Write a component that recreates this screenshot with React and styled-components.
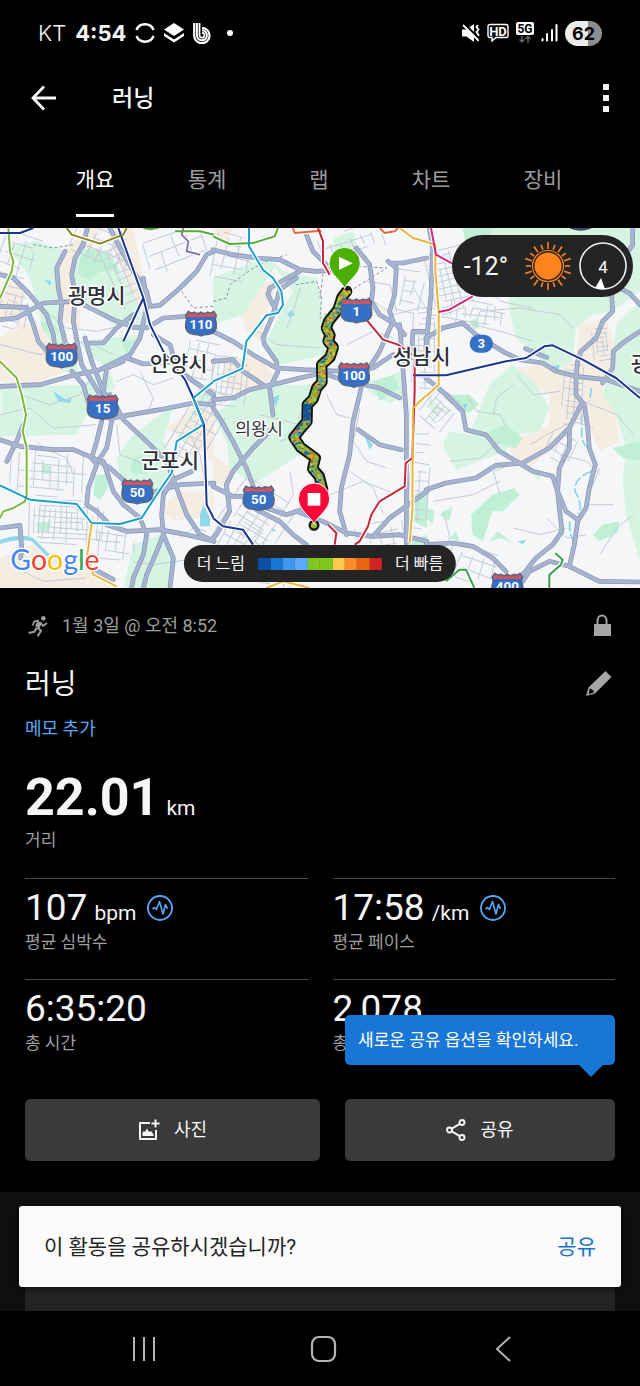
import React from "react"
import styled, { createGlobalStyle } from "styled-components"

const GlobalStyle = createGlobalStyle`
  * {
    box-sizing: border-box;
  }
  body {
    margin: 0;
    background: #000;
    color: #f5f5f5;
    font-family: Roboto, "Noto Sans CJK KR", sans-serif;
  }
  button {
    border: 0;
    padding: 0;
    background: none;
    color: inherit;
    font: inherit;
    cursor: pointer;
  }
  svg {
    display: block;
    flex: none;
  }
`
const StatusBar = styled.header`
  display: flex;
  align-items: center;
  justify-content: space-between;
  height: 66px;
  padding: 0 38px;
  font-family: Inter, sans-serif;
  font-size: 22px;
  line-height: 28px;
`
const StatusGroup = styled.div`
  display: flex;
  align-items: center;
  gap: ${props => props.$gap}px;
`
const Carrier = styled.span`
  font-weight: 300;
`
const Clock = styled.time`
  font-weight: 700;
`
const More = styled.span`
  width: 6px;
  height: 6px;
  margin-left: 7px;
  border-radius: 50%;
  background: #fff;
`
const Battery = styled.span`
  width: 37px;
  border-radius: 13px;
  background: linear-gradient(90deg, #ececec 62%, #8d8d8d 62%);
  color: #000;
  font-size: 18px;
  font-weight: 700;
  line-height: 25px;
  text-align: center;
`
const AppBar = styled.div`
  display: flex;
  align-items: center;
  height: 64px;
  padding: 0 30px;
`
const AppTitle = styled.h1`
  flex: 1;
  margin: 0 0 0 56px;
  padding-top: 2px;
  font-size: 23px;
  font-weight: 500;
  line-height: 32px;
`
const Tabs = styled.nav`
  display: flex;
  height: 98px;
  padding: 0 41px 0 39px;
`
const Tab = styled.button`
  flex: 1;
  display: flex;
  justify-content: center;
  color: ${props => (props.$active ? "#fff" : "#9c9c9c")};
  font-size: 21px;
  line-height: 100px;

  span {
    height: 87px;
    border-bottom: 3px solid ${props => (props.$active ? "#fff" : "transparent")};
  }
`
const MapArea = styled.section`
  position: relative;
  height: 360px;
  overflow: hidden;
  background: #f5f6f8;

  > svg {
    width: 100%;
    height: 100%;
  }
`
const Weather = styled.div`
  position: absolute;
  top: 7px;
  right: 7px;
  display: flex;
  align-items: center;
  height: 62px;
  padding: 0 6px 0 12px;
  border-radius: 31px;
  background: #242424;
  font-size: 25px;
  gap: 16px;
`
const WeatherIcons = styled.div`
  display: flex;
  align-items: center;
  gap: 7px;
`
const Legend = styled.div`
  position: absolute;
  bottom: 6px;
  left: 50%;
  transform: translateX(-50%);
  display: flex;
  align-items: center;
  gap: 13px;
  height: 37px;
  padding: 0 13px;
  border-radius: 19px;
  background: #242424;
  font-size: 16px;
  line-height: 20px;
  white-space: nowrap;
`
const Scale = styled.div`
  display: flex;
  width: 124px;
  height: 12px;
`
const Swatch = styled.span`
  flex: 1;
  background: ${props => props.$color};
`
const Details = styled.main`
  padding: 25px 25px 31px;
`
const Row = styled.div`
  display: flex;
  align-items: center;
  gap: 13px;
`
const TitleRow = styled.div`
  display: flex;
  align-items: center;
  margin-top: 24px;
  padding-right: 2px;
`
const When = styled.span`
  flex: 1;
  color: #9e9e9e;
  font-size: 18px;
  line-height: 26px;
`
const ActivityName = styled.h2`
  flex: 1;
  margin: 0;
  padding-top: 2px;
  font-size: 28px;
  font-weight: 400;
  line-height: 40px;
`
const NoteLink = styled.a`
  display: block;
  margin-top: 12px;
  color: #5aa7f5;
  font-size: 18px;
  line-height: 24px;
  text-decoration: none;
`
const Value = styled.div`
  display: flex;
  align-items: baseline;
  gap: 7px;
  font-size: ${props => (props.$big ? 52 : 37)}px;
  font-weight: ${props => (props.$big ? 700 : 400)};
  line-height: ${props => (props.$big ? 60 : 44)}px;

  svg {
    align-self: center;
    margin-left: 4px;
  }
`
const Unit = styled.span`
  font-size: 21px;
  font-weight: 400;
  line-height: 24px;
`
const Label = styled.div`
  color: #9e9e9e;
  font-size: 17px;
  line-height: 24px;
`
const Distance = styled.div`
  margin: 27px 0 26px;
`
const Stats = styled.div`
  display: grid;
  grid-template-columns: 1fr 1fr;
  column-gap: 25px;
`
const Stat = styled.div`
  padding: 7px 0 25px;
  border-top: 1px solid #484848;
`
const Actions = styled.div`
  display: grid;
  grid-template-columns: 295fr 270fr;
  gap: 25px;
  margin-top: 19px;
`
const ActionCell = styled.div`
  position: relative;
`
const ActionButton = styled.button`
  display: flex;
  align-items: center;
  justify-content: center;
  gap: 14px;
  width: 100%;
  height: 62px;
  border-radius: 5px;
  background: #3a3a3a;
  font-size: 18px;
  line-height: 24px;
`
const Tooltip = styled.div`
  position: absolute;
  right: 0;
  bottom: 96px;
  left: 0;
  padding: 0 13px;
  border-radius: 5px;
  background: #1976d5;
  color: #fff;
  font-size: 17px;
  line-height: 50px;
  white-space: nowrap;

  &::after {
    content: "";
    position: absolute;
    top: 100%;
    right: 12px;
    border: 12px solid transparent;
    border-top-color: #1976d5;
    border-bottom: 0;
  }
`
const Feed = styled.section`
  padding: 14px 19px 0;
  background: #0f0f0f;
`
const Snackbar = styled.div`
  position: relative;
  display: flex;
  align-items: center;
  justify-content: space-between;
  height: 81px;
  padding: 0 25px;
  border-radius: 3px;
  background: #fbfbfb;
  box-shadow: 0 3px 6px rgba(0, 0, 0, 0.5);
  color: #242424;
  font-size: 21px;
  line-height: 28px;
`
const SnackbarAction = styled.button`
  color: #1a73c8;
`
const FeedCard = styled.div`
  height: 24px;
  margin: 0 6px;
  background: #242424;
`
const SystemNav = styled.footer`
  display: flex;
  height: 75px;
  padding: 0 47px 0 54px;
`
const NavKey = styled.button`
  flex: 1;
  display: flex;
  align-items: center;
  justify-content: center;
`

/* ---- map ---- */

// The map is drawn on a 1920 x 1080 sheet, split into three columns
const COLUMN_X = [0, 639, 1278]

const BEIGE = [
  [
    "M0 330L60 280L130 300L160 380L200 430L90 470L0 460Z",
    "M160 100L200 60L270 0H310L250 90L240 300L190 280Z",
    "M320 0H400L430 150L420 260L360 110Z",
    "M0 990L100 950L200 1000L330 1050L340 1080H0Z",
    "M480 840L540 790L642 790V860L520 880Z",
    "M20 150L70 190L60 260L0 280V180Z",
    "M500 600L600 520L642 560V700L560 640Z",
  ],
  [
    "M60 200L200 150L160 260L140 340L100 310Z",
    "M30 400L130 380L200 460L100 520L40 470Z",
    "M0 680L60 720L40 780L0 760Z",
    "M0 0H60L40 40L0 30Z",
  ],
  ["M260 420L450 400L460 290L540 270L575 370L530 480L570 560L580 640L520 670L490 600L450 560L400 640L300 730L240 650L370 590L370 500Z"],
]

const PARK = [
  [
    "M20 50L110 40L200 70L180 110L190 300L240 440L190 430L130 300L90 150Z",
    "M230 60L330 70L420 240L440 300L340 290L260 230L215 230Z",
    "M0 480L240 470L330 430L345 480L260 560L230 620L0 625Z",
    "M520 530L490 640L520 700L510 790L430 800L360 740L350 690L400 620Z",
    "M400 950L480 920L530 1000L510 1080H370Z",
    "M560 580L600 560L642 520V480L600 500Z",
    "M240 340L420 320L370 390L320 420L260 380Z",
  ],
  [
    "M165 90L210 130L310 150L325 230L340 380L200 410L160 340L200 260L240 190Z",
    "M0 150L150 90L190 110L90 260L0 290Z",
    "M0 560L60 520L170 470L300 470L290 560L240 620L260 680L120 770L50 720L40 640Z",
    "M430 450L500 460L560 430L570 510L530 525L480 500Z",
    "M360 30L420 10L430 50L370 80Z",
  ],
  [
    "M160 0H642V190L560 250L500 260L450 300L440 400L380 430L270 330L250 250L250 180Z",
    "M570 290L642 220V1000L600 860L590 760L600 660L570 560L530 500L560 400Z",
    "M190 470L260 410L330 470L370 540L340 610L260 620L240 670L90 725L50 650L70 610L130 620Z",
    "M0 500L60 550L20 560Z",
    "M320 740L350 730L340 760Z",
  ],
]

const FOREST = [
  [
    "M240 90L265 60L320 75L360 130L300 130L270 155L235 140Z",
    "M285 740H320L325 780L300 815L280 800Z",
    "M110 885L155 880L145 910H115Z",
    "M125 710L155 715L150 740L125 735Z",
    "M360 330L400 340L380 380Z",
    "M120 280L160 290L180 310L130 310Z",
    "M400 690L430 680L440 740L390 735Z",
  ],
  ["M480 460L540 440L560 480L500 520Z", "M590 800L642 790V900L600 880Z", "M590 940L642 920V1000L600 1010Z"],
  [
    "M135 860L200 800L265 780L280 800L230 850L200 850L170 940L140 920Z",
    "M500 920L530 890L580 880L575 915L520 940Z",
    "M190 610L240 590L290 630L270 660L200 640Z",
    "M70 500L130 500L160 530L130 555L90 545Z",
    "M130 280L155 270L160 295L145 305Z",
    "M560 660L642 640V700L590 690Z",
    "M215 910L260 945L225 930L190 940Z",
    "M40 860L80 835L70 880Z",
    "M0 840L25 850L20 890L0 870Z",
    "M70 930L90 910L100 940Z",
    "M110 0H200L180 40L120 50Z",
  ],
]

const WATER = [
  [
    "M160 490L200 515L215 510L210 525L175 520Z",
    "M610 830L630 870V895H600V860Z",
    "M135 155L155 160L150 175Z",
    "M0 935Q60 915 100 930L150 980L140 985L95 940Q50 930 0 948Z",
  ],
  ["M222 260L235 245L245 260L230 268Z", "M175 510L200 500L190 535Z", "M455 625L480 650L470 665Z", "M175 900L190 905L180 912Z"],
  ["M378 415L400 410L398 425L382 428Z", "M275 940L300 935L290 950Z", "M110 530L125 525L118 545Z"],
]

const ROADS = [
  [
    "M0 140L40 150L90 200L140 260L160 320L165 360",
    "M0 275L50 270L130 225L230 220L270 240L340 275L400 298L440 300L490 270L560 265",
    "M0 235L80 238L100 290L115 340L150 380",
    "M0 475L120 470L210 445L300 425L350 400L390 380L420 330L442 230L430 150",
    "M195 70L170 120L175 180L185 230L180 280L195 340",
    "M262 0L250 50L225 90L215 140L225 200L220 280L235 360L245 410L300 500",
    "M330 0L360 60L400 130L440 190L450 235L480 232L540 180L590 130L620 80L642 70",
    "M255 330L275 400L310 490L330 520",
    "M270 345H310L350 300L400 260",
    "M215 430L250 470L270 540L330 572L380 562L480 545L580 525L642 530",
    "M330 500L370 575L450 650L500 700L530 780L560 860L600 920L642 940",
    "M310 490L320 420L370 400",
    "M305 580L290 640L275 690L290 710L265 780L260 830L290 850L320 880",
    "M335 580L320 660L300 690",
    "M0 635L60 655L160 665L220 665L290 695L330 720L380 765",
    "M310 700L340 790L370 830L420 870L440 920L430 980L400 1050L395 1080",
    "M450 795L540 770L642 765",
    "M575 730L520 755L490 800L485 860L490 920L470 970L440 1040L430 1080",
    "M0 900L60 892L65 960L62 990",
    "M490 920L520 990L510 1080",
    "M320 890L380 910L480 905L560 920L642 940",
    "M70 590L50 640L20 700",
    "M460 320L510 350L530 420L580 460L642 500",
    "M380 390L430 408L540 400",
    "M285 1025L340 1055",
  ],
  [
    "M0 65L60 80L130 90L200 95L260 125L310 130L390 125",
    "M280 20L300 70L340 110",
    "M430 60L470 110L480 180L475 220L500 260L550 290L575 320",
    "M525 100L550 120L545 200L530 250L540 280L500 370L450 450L440 500L420 580L410 680L385 780L380 850L400 920",
    "M530 105L570 105L642 90",
    "M0 310L60 340L120 380L190 420L270 425L400 430L480 420L540 380",
    "M0 515L60 510L110 485L200 465L260 450L330 435L400 460L500 480L560 510",
    "M190 250L165 200L170 180L260 130",
    "M250 150L200 185L180 260L150 330L155 350L190 400L195 430L170 480L180 560",
    "M0 400L60 395L90 430L150 470",
    "M0 540L20 570L60 640L100 720L130 800L160 840L220 860L280 840",
    "M180 600L120 660L60 730L40 770L50 850L10 920L0 930",
    "M0 775L60 805H120",
    "M130 845L200 880L240 920L280 950",
    "M250 850L330 880L400 915L480 925L530 870L642 790",
    "M435 605L500 650L565 665",
    "M595 390L600 310H642",
    "M560 290L580 560V950",
    "M480 925L560 920L642 940",
  ],
  [
    "M10 0L20 60L15 200L0 360",
    "M0 330L50 300L110 285L150 320L230 370L280 395L350 405L390 430L450 445L540 455L642 490",
    "M557 200L560 250L530 280L510 330L465 370L455 400L450 450V500L475 530L485 600L490 660L508 710L490 780L480 840L455 880L445 950L430 1015",
    "M530 465L560 420L562 370L590 345L642 310",
    "M0 450L60 500L110 550L120 605L180 620L220 670L280 705",
    "M465 530L430 600L370 660L290 705L210 712L150 750L60 765L0 785",
    "M280 705L320 730L380 745L395 790L400 840L408 910L380 950L330 990L290 1040",
    "M430 600V660L400 720L395 790L420 850L455 875",
    "M290 1060L310 1030L370 1000L430 1015L520 1060L642 1062",
    "M0 950L80 945L140 955L200 990L240 1030",
    "M570 175L610 195L642 230",
    "M620 0V50L600 80",
    "M298 362L362 388",
  ],
]

const RAILS = [
  [
    ["#7cb83c", "M25 0L30 70L40 100L35 130L0 210M0 400L50 450L65 500L78 560L68 610L80 660V800L75 820L40 840L10 850L0 870"],
    ["#18378c", "M0 15H60L100 0M355 0L430 210L370 340M430 210L450 290L490 370L555 455L580 510L612 590L620 830L642 872"],
    ["#1d9fcb", "M0 772L90 815L230 828L275 885L360 888L425 870L470 800L515 735L530 640L610 590L580 510L642 460"],
    ["#ecb53c", "M275 885L262 980L280 1040L350 1075"],
    ["#878620", "M200 0L215 20L300 47L370 20L380 0"],
    ["#8c74b9", "M550 0L545 20L565 40L560 70L600 80"],
    ["#55ad31", "M430 0L450 4L475 0M525 10H600L642 20"],
  ],
  [
    ["#55ad31", "M0 25L50 48L120 45L185 25L195 0"],
    ["#1d9fcb", "M0 460L88 422L100 340L160 262L195 255L210 230L205 190L180 150L150 125L108 55V0"],
    ["#18378c", "M0 870L30 895L90 905L120 950M600 442H642"],
    ["#e8673a", "M240 0L245 15L325 8M500 0L515 15L545 10L555 0"],
    ["#c2283b", "M315 0L330 40V105L350 140M460 275L510 335L555 350L605 385V490L598 690L578 705L575 775L500 820L475 860L465 895L440 940L425 950M345 890L370 915L365 950"],
    ["#ecb53c", "M560 0L600 30L642 42M642 500L600 540L598 850L590 945M160 1080L210 1060L290 1080"],
  ],
  [
    ["#ecb53c", "M0 42L28 50V130L38 250V470L0 505"],
    ["#cf2a7e", "M15 0L30 80L85 110M38 252L70 245L140 205"],
    ["#18378c", "M0 442H60L240 400L300 390L355 355L380 352L470 395L570 450L642 510"],
    ["#3a9d48", "M388 975L410 995L405 1010L370 1040V1080M60 1060L100 1025H120L145 1080"],
  ],
]

// x, y, width, height, spacing and tilt of each dense street block
const BLOCKS = [
  [30, 660, 230, 150, 24, 4],
  [85, 820, 230, 130, 16, 3],
  [270, 890, 130, 120, 26, 6],
  [0, 20, 120, 130, 32, 18],
  [210, 10, 180, 110, 30, 24],
  [330, 30, 90, 220, 24, -24],
  [440, 10, 190, 110, 44, -20],
  [540, 480, 110, 240, 22, 30],
  [560, 340, 90, 130, 28, 10],
  [640, 20, 120, 150, 34, 12],
  [630, 390, 120, 160, 18, 8],
  [680, 780, 180, 170, 30, 34],
  [640, 880, 190, 130, 24, 30],
  [960, 0, 220, 90, 32, -18],
  [1180, 100, 90, 150, 30, 12],
  [1240, 240, 70, 250, 16, 0],
  [1230, 620, 60, 290, 28, 4],
  [1290, 60, 130, 190, 19, -14],
  [1350, 220, 170, 80, 22, 8],
  [1270, 490, 100, 110, 18, 40],
  [1690, 410, 60, 190, 18, 4],
  [1780, 300, 50, 110, 14, -6],
  [1340, 960, 150, 110, 34, 20],
  [1070, 880, 150, 90, 36, -12],
  [700, 1020, 180, 60, 22, 16],
  [1640, 620, 80, 90, 26, 24],
  [0, 180, 80, 120, 20, 12],
]

const LANES = [
  "M0 350L120 380L260 340L340 380M0 560L90 540L160 600L290 590M350 590L360 680L440 710M110 640L130 660L200 690L220 740",
  "M350 460L400 440L460 470L520 450M420 430L460 510L440 560M150 260L200 300L290 310L380 290M60 500L150 530L240 500L280 440",
  "M520 610L570 620L600 680L620 800M400 1000L460 1010L600 990M540 930L580 900L620 910M70 1030L130 1060L260 1050",
  "M760 300L830 350L960 360M840 640L890 620L900 560M780 560L900 590M870 730L880 800L850 850M900 180L880 250L860 300",
  "M980 500L1010 560L1050 570M990 800L1090 760L1190 800M1050 730L1120 780L1150 860M1080 540L1060 640L1100 700L1160 720",
  "M1100 160L1170 170L1190 250M1120 220L1180 260L1260 240M1040 350L1120 310L1180 330M1240 180L1290 260L1400 280",
  "M1330 300L1420 290L1500 310L1600 340M1440 250L1560 240L1680 260L1720 300M1520 600L1500 560L1430 550L1400 500",
  "M1590 650L1640 620L1720 580L1780 600M1550 440L1600 500L1680 490M1350 700L1440 690L1500 640M1500 800L1480 730L1560 700",
  "M1680 680L1760 700L1800 740M1300 820L1420 800L1500 760M1330 850L1350 930L1310 990M1540 900L1620 920L1700 900",
  "M1760 830L1840 830M1640 870L1700 930L1760 920M1800 980L1850 900L1900 860M1700 60L1780 100L1850 60L1900 90",
  "M1480 560L1490 510L1540 470M1450 160L1500 220L1600 240M1750 520L1850 560L1900 620M1800 720L1770 790",
]

const seeded = start => {
  let n = start
  return () => {
    n = (n * 16807) % 2147483647
    return n / 2147483647
  }
}

const streets = ([x, y, w, h, step], seed) => {
  const rand = seeded(seed * 977 + 31)
  let d = ""
  for (let i = 0; i <= w; i += step) {
    const a = rand() * h * 0.4
    const b = h - rand() * h * 0.4
    d += `M${x + i} ${y + a}L${x + i + rand() * 10 - 5} ${y + b}`
  }
  for (let j = 0; j <= h; j += step) {
    const a = rand() * w * 0.4
    const b = w - rand() * w * 0.4
    d += `M${x + a} ${y + j}L${x + b} ${y + j + rand() * 10 - 5}`
  }
  return d
}

const ROUTE = [
  [1040, 190], [1026, 208], [1014, 245], [986, 280], [979, 300], [990, 322], [984, 340], [1000, 358],
  [990, 388], [965, 410], [966, 462], [950, 480], [940, 512], [922, 530], [921, 580], [900, 605],
  [882, 628], [902, 658], [946, 690], [938, 722], [958, 745], [968, 785],
]
const PACE = ["#84b52c", "#9bbd2e", "#d0c534", "#1f5fae", "#f3a12f", "#3c9bd0", "#ec6a1e", "#84b52c"]

const routeChips = () => {
  const rand = seeded(4242)
  const chips = []
  ROUTE.slice(1).forEach(([x2, y2], i) => {
    const [x1, y1] = ROUTE[i]
    const steps = Math.ceil(Math.hypot(x2 - x1, y2 - y1) / 6)
    const blue = y1 >= 530 && y2 <= 580
    for (let s = 0; s < steps; s++) {
      for (let k = -1; k <= 1; k++) {
        const t = s / steps
        chips.push({
          x: x1 + (x2 - x1) * t + k * 7 - 4,
          y: y1 + (y2 - y1) * t + rand() * 4 - 5,
          w: 6 + rand() * 3,
          h: 5 + rand() * 6,
          color: blue ? "#154f9c" : PACE[Math.floor(rand() * PACE.length)],
        })
      }
    }
  })
  return chips
}

const Shield = ({ x, y, label }) => (
  <g transform={`translate(${x} ${y})`}>
    <path
      d="M-38 -36Q-30 -28 -20 -34Q-8 -26 0 -34Q8 -26 20 -34Q30 -28 38 -36L46 -24Q40 -12 46 0Q50 28 24 33Q8 34 0 38Q-8 34 -24 33Q-50 28 -46 0Q-40 -12 -46 -24Z"
      fill="#3570c4"
      stroke="#5b6478"
      strokeWidth="4"
    />
    <path d="M-37 -33Q-30 -26 -20 -31Q-8 -24 0 -31Q8 -24 20 -31Q30 -26 37 -33L43 -24L40 -19H-40L-43 -24Z" fill="#cf5560" />
    <text y="17" textAnchor="middle" fill="#fff" fontSize="40" fontWeight="700">{label}</text>
  </g>
)

const Place = ({ x, y, size = 63, weight = 500, children }) => (
  <text x={x} y={y} fontSize={size} fontWeight={weight} fill="#2d3138" stroke="#fff" strokeWidth="9" strokeLinejoin="round" paintOrder="stroke">
    {children}
  </text>
)

const Pin = ({ x, y, color, children }) => (
  <g transform={`translate(${x} ${y})`}>
    <path d="M0 76C-8 52 -47 34 -47 -1A47 47 0 0 1 47 -1C47 34 8 52 0 76Z" fill={color} stroke="#fff" strokeWidth="3" />
    {children}
  </g>
)

const Layer = ({ data, ...rest }) => data.map((paths, i) => (
  <g key={i} transform={`translate(${COLUMN_X[i]})`} {...rest}>
    {paths.map(d => <path key={d} d={d} />)}
  </g>
))

const RouteMap = () => (
  <svg viewBox="0 0 1920 1080" preserveAspectRatio="xMidYMid slice" role="img" aria-label="러닝 경로">
    <rect width="1920" height="1080" fill="#f5f6f8" />
    <Layer data={BEIGE} fill="#f5ede2" />
    <Layer data={PARK} fill="#d5f5e2" />
    <Layer data={FOREST} fill="#bff0d5" />
    <Layer data={WATER} fill="#90d9ec" />
    <path d="M1775 480L1768 520M1745 560V630Q1755 660 1775 665M1775 730Q1720 750 1725 790Q1750 830 1735 860M1710 880Q1705 910 1720 940" fill="none" stroke="#82d5ec" strokeWidth="5" strokeDasharray="30 8" />
    <g fill="none" stroke="#c6cbd8" strokeWidth="3">
      {BLOCKS.map((b, i) => (
        <path key={i} d={streets(b, i + 1)} transform={`rotate(${b[5]} ${b[0] + b[2] / 2} ${b[1] + b[3] / 2})`} />
      ))}
      {LANES.map(d => <path key={d} d={d} strokeLinejoin="round" />)}
    </g>
    <path d="M640 220L680 210L690 170L760 120L800 100L860 80M860 150L890 170L950 160L965 210L960 270L990 250M545 190L580 240L640 235M100 50L160 60L220 50M960 210L970 130L1000 110L1160 120L1080 170L1050 190" fill="none" stroke="#8d93a0" strokeWidth="3" strokeDasharray="9 7" />
    <Layer data={ROADS} fill="none" stroke="#8494b8" strokeWidth="14" strokeLinejoin="round" strokeLinecap="round" />
    <Layer data={ROADS} fill="none" stroke="#a7b4d0" strokeWidth="10" strokeLinejoin="round" strokeLinecap="round" />
    {RAILS.map((lines, i) => (
      <g key={i} transform={`translate(${COLUMN_X[i]})`} fill="none" strokeLinejoin="round">
        {lines.map(([color, d]) => <path key={d} d={d} stroke="#fff" strokeWidth="13" />)}
        {lines.map(([color, d]) => <path key={color} d={d} stroke={color} strokeWidth="6" />)}
      </g>
    ))}

    <Place x="203" y="225">광명시</Place>
    <Place x="449" y="430">안양시</Place>
    <Place x="423" y="721">군포시</Place>
    <Place x="1178" y="409">성남시</Place>
    <Place x="1892" y="430">광주시</Place>
    <Place x="-167" y="547">시흥시</Place>
    <Place x="705" y="620" size={52} weight={400}>의왕시</Place>

    <Shield x={185} y={382} label="100" />
    <Shield x={603} y={286} label="110" />
    <Shield x={308} y={537} label="15" />
    <Shield x={412} y={790} label="50" />
    <Shield x={776} y={810} label="50" />
    <Shield x={1062} y={440} label="100" />
    <Shield x={1522} y={1072} label="400" />
    <rect x="1409" y="320" width="70" height="54" rx="27" fill="#3570c4" />
    <text x="1444" y="360" textAnchor="middle" fill="#fff" fontSize="38" fontWeight="700">3</text>
    <ellipse cx="1742" cy="-6" rx="36" ry="14" fill="#3a4a66" />

    <polyline points={ROUTE.join(" ")} fill="none" stroke="#111" strokeWidth="34" strokeLinecap="round" strokeLinejoin="round" />
    <polyline points={ROUTE.join(" ")} fill="none" stroke="#84a93a" strokeWidth="22" strokeLinejoin="round" />
    {routeChips().map((c, i) => <rect key={i} x={c.x} y={c.y} width={c.w} height={c.h} fill={c.color} />)}
    <circle cx="942" cy="892" r="13" fill="#9bbd2e" stroke="#111" strokeWidth="7" />
    <Shield x={1069} y={247} label="1" />
    <Pin x={1034} y={106} color="#4bb003">
      <path d="M-17 -20L24 0L-17 20Z" fill="#fff" />
    </Pin>
    <Pin x={942} y={813} color="#f8093a">
      <rect x="-19" y="-18" width="38" height="38" fill="#fff" />
    </Pin>

    <text x="31" y="1026" fontFamily="Lato, sans-serif" fontSize="85" stroke="#fff" strokeWidth="8" strokeLinejoin="round" paintOrder="stroke">
      <tspan fill="#4285f4">G</tspan>
      <tspan fill="#ea4335">o</tspan>
      <tspan fill="#fbbc05">o</tspan>
      <tspan fill="#4285f4">g</tspan>
      <tspan fill="#34a853">l</tspan>
      <tspan fill="#ea4335">e</tspan>
    </text>
  </svg>
)

/* ---- icons ---- */

const SyncIcon = () => (
  <svg width="20" height="20" viewBox="0 0 20 20" fill="none" stroke="#fff" strokeWidth="2.400">
    <path d="M1.500 7A9 8.500 0 0 1 18.500 7M1.500 13A9 8.500 0 0 0 18.500 13" />
  </svg>
)

const LayersIcon = () => (
  <svg width="20" height="20" viewBox="0 0 20 20" fill="#fff">
    <path d="M10 0L20 6.500L10 13L0 6.500Z" />
    <path d="M0 10L10 16.500L20 10V13L10 19.500L0 13Z" />
  </svg>
)

const BandIcon = () => (
  <svg width="18" height="22" viewBox="0 0 18 22" fill="none" stroke="#fff">
    <path d="M1.200 1V13A7.700 7.700 0 1 0 9 5.800" strokeWidth="2.200" />
    <path d="M3.900 1V13A5 5 0 1 0 9 8.300" strokeWidth="2" />
    <path d="M6.500 1V13A2.500 2.500 0 1 0 9 10.700" strokeWidth="1.800" />
  </svg>
)

const MuteIcon = () => (
  <svg width="18" height="20" viewBox="0 0 18 20" fill="#fff">
    <path d="M0 6.500H4.500L12 1V19L4.500 13.500H0Z" />
    <path d="M16 2L14.500 4L16.500 6.500L14.500 9L16.500 12L14.500 15L16.500 18" fill="none" stroke="#fff" strokeWidth="1.800" />
    <path d="M1 0L16 15" stroke="#000" strokeWidth="3" />
    <path d="M1 2L16 17" stroke="#fff" strokeWidth="1.800" />
  </svg>
)

const HdIcon = () => (
  <svg width="22" height="20" viewBox="0 0 22 20" fill="none" stroke="#fff" strokeWidth="1.400">
    <path d="M3 1.500H19A2 2 0 0 1 21 3.500V12.500A2 2 0 0 1 19 14.500H9L5 18V14.500H3A2 2 0 0 1 1 12.500V3.500A2 2 0 0 1 3 1.500Z" />
    <text x="11" y="12.500" textAnchor="middle" fontFamily="Roboto, sans-serif" fontSize="13" fontWeight="700" fill="#fff" stroke="none">HD</text>
  </svg>
)

const FiveGIcon = () => (
  <svg width="18" height="22" viewBox="0 0 18 22">
    <rect width="18" height="13" rx="2" fill="#fff" />
    <text x="9" y="11" textAnchor="middle" fontFamily="Roboto, sans-serif" fontSize="12" fontWeight="700" fill="#000">5G</text>
    <path d="M6 14V20M3.500 17.500L6 20L8.500 17.500M12 21V15M9.500 17L12 14.500L14.500 17" fill="none" stroke="#666" strokeWidth="1.400" />
  </svg>
)

const SignalIcon = () => (
  <svg width="17" height="18" viewBox="0 0 17 18" stroke="#fff" strokeWidth="2" strokeLinecap="round">
    <path d="M1.500 15V16.500M6 10V16.500M11 6V16.500" />
    <path d="M15.500 1V16.500" />
  </svg>
)

const BackIcon = () => (
  <svg width="26" height="26" viewBox="0 0 26 26" fill="none" stroke="#f5f5f5" strokeWidth="2.800">
    <path d="M14 1.500L3 13L14 24.500M3 13H26" />
  </svg>
)

const MoreIcon = () => (
  <svg width="8" height="30" viewBox="0 0 8 30" fill="#f5f5f5">
    <path d="M1 1H7V7H1ZM1 12H7V18H1ZM1 23H7V29H1Z" />
  </svg>
)

const SunIcon = () => (
  <svg width="48" height="48" viewBox="-24 -24 48 48" stroke="#ff841c" fill="none">
    <circle r="13.500" fill="#ff841c" stroke="none" />
    <circle r="15.500" strokeWidth="1.200" />
    {Array.from({ length: 20 }, (_, i) => (
      <path key={i} d={i % 2 ? "M0 -17V-22" : "M0 -17V-24"} strokeWidth="1.600" transform={`rotate(${i * 18})`} />
    ))}
  </svg>
)

const WindIcon = () => (
  <svg width="48" height="48" viewBox="0 0 48 48">
    <circle cx="24" cy="24" r="23" fill="none" stroke="#f0f0f0" strokeWidth="1.600" />
    <path d="M22 36L16 46Q21 48 26 47Z" fill="#fff" />
    <text x="24" y="31" textAnchor="middle" fontSize="17" fill="#fff">4</text>
  </svg>
)

const RunnerIcon = () => (
  <svg width="24" height="24" viewBox="76 70 72 72" fill="none" stroke="#9e9e9e" strokeWidth="6" strokeLinejoin="round">
    <circle cx="131" cy="83" r="7" fill="#9e9e9e" stroke="none" />
    <path d="M120 94L113 110" strokeWidth="15" />
    <path d="M122 94L130 106L142 97M118 90L104 92L99 104" strokeWidth="5" />
    <path d="M114 111L124 120L114 137M112 111L104 123L87 127" />
  </svg>
)

const LockIcon = () => (
  <svg width="26" height="26" viewBox="0 0 26 26">
    <path d="M8.500 12V7.500A4.500 5 0 0 1 17.500 7.500V12" fill="none" stroke="#a5a5a5" strokeWidth="2" />
    <rect x="5" y="11" width="17" height="12" fill="#a5a5a5" />
  </svg>
)

const PencilIcon = () => (
  <svg width="28" height="28" viewBox="0 0 28 28" fill="#a5a5a5">
    <path d="M20.500 1L26.500 7L10 23.500L1 26L3.500 17.500Z" />
    <path d="M4.800 18.300L8.500 20.500L8.800 22.500L3.800 24Z" fill="#000" />
  </svg>
)

const PulseIcon = () => (
  <svg width="26" height="26" viewBox="0 0 26 26" fill="none" stroke="#5aa7f5" strokeWidth="1.800">
    <circle cx="13" cy="13" r="12" />
    <path d="M5.500 14L7.500 12.500L9.500 14.500L12.500 6.500L16 19L18.500 9.500L20.500 14" strokeLinejoin="round" strokeWidth="1.600" />
  </svg>
)

const PhotoIcon = () => (
  <svg width="22" height="22" viewBox="0 0 22 22" fill="none" stroke="#f5f5f5" strokeWidth="2">
    <path d="M12 4H2V20H18V11" />
    <path d="M17.500 0.500V8.500M13.500 4.500H21.500" />
    <path d="M4.500 17V13.500L6 12L7 13L9 9.500L11 13L13 12L15.500 15.500V17Z" fill="#f5f5f5" stroke="none" />
  </svg>
)

const ShareIcon = () => (
  <svg width="20" height="22" viewBox="0 0 20 22" fill="none" stroke="#f5f5f5" strokeWidth="1.900">
    <circle cx="3.500" cy="11" r="2.500" />
    <circle cx="16" cy="3.500" r="2.500" />
    <circle cx="16" cy="18.500" r="2.500" />
    <path d="M5.800 9.600L13.800 4.900M5.800 12.400L13.800 17.100" />
  </svg>
)

const RecentsIcon = () => (
  <svg width="24" height="30" viewBox="0 0 24 30" stroke="#b4b4b4" strokeWidth="2">
    <path d="M2 3V27M12 3V27M22 3V27" />
  </svg>
)

const HomeIcon = () => (
  <svg width="28" height="30" viewBox="0 0 28 30" fill="none" stroke="#b4b4b4" strokeWidth="2.200">
    <rect x="2" y="3" width="23" height="24" rx="7" />
  </svg>
)

const NavBackIcon = () => (
  <svg width="16" height="30" viewBox="0 0 16 30" fill="none" stroke="#b4b4b4" strokeWidth="2">
    <path d="M15 3L2 15L15 27" />
  </svg>
)

const TABS = ["개요", "통계", "랩", "차트", "장비"]
const PACE_SCALE = ["#0b4ea2", "#1976d2", "#3f97f0", "#5aacf9", "#80c81e", "#80c81e", "#fdc94d", "#fb8c28", "#ea640f", "#d32222"]
const STATS = [
  { value: "107", unit: "bpm", label: "평균 심박수", pulse: true },
  { value: "17:58", unit: "/km", label: "평균 페이스", pulse: true },
  { value: "6:35:20", label: "총 시간" },
  { value: "2,078", label: "총 칼로리" },
]

const App = () => (
  <>
    <GlobalStyle />
    <StatusBar>
      <StatusGroup $gap={9}>
        <Carrier>KT</Carrier>
        <Clock>4:54</Clock>
        <SyncIcon />
        <LayersIcon />
        <BandIcon />
        <More />
      </StatusGroup>
      <StatusGroup $gap={7}>
        <MuteIcon />
        <HdIcon />
        <FiveGIcon />
        <SignalIcon />
        <Battery>62</Battery>
      </StatusGroup>
    </StatusBar>
    <AppBar>
      <button aria-label="뒤로"><BackIcon /></button>
      <AppTitle>러닝</AppTitle>
      <button aria-label="더보기"><MoreIcon /></button>
    </AppBar>
    <Tabs>
      {TABS.map((tab, i) => (
        <Tab key={tab} $active={i === 0}><span>{tab}</span></Tab>
      ))}
    </Tabs>

    <MapArea>
      <RouteMap />
      <Weather>
        <span>-12°</span>
        <WeatherIcons>
          <SunIcon />
          <WindIcon />
        </WeatherIcons>
      </Weather>
      <Legend>
        <span>더 느림</span>
        <Scale>
          {PACE_SCALE.map((color, i) => <Swatch key={i} $color={color} />)}
        </Scale>
        <span>더 빠름</span>
      </Legend>
    </MapArea>

    <Details>
      <Row>
        <RunnerIcon />
        <When>1월 3일 @ 오전 8:52</When>
        <LockIcon />
      </Row>
      <TitleRow>
        <ActivityName>러닝</ActivityName>
        <button aria-label="이름 편집"><PencilIcon /></button>
      </TitleRow>
      <NoteLink href="#note">메모 추가</NoteLink>

      <Distance>
        <Value $big>22.01 <Unit>km</Unit></Value>
        <Label>거리</Label>
      </Distance>
      <Stats>
        {STATS.map(s => (
          <Stat key={s.label}>
            <Value>
              {s.value}
              {s.unit && <Unit>{s.unit}</Unit>}
              {s.pulse && <PulseIcon />}
            </Value>
            <Label>{s.label}</Label>
          </Stat>
        ))}
      </Stats>

      <Actions>
        <ActionButton><PhotoIcon />사진</ActionButton>
        <ActionCell>
          <Tooltip role="tooltip">새로운 공유 옵션을 확인하세요.</Tooltip>
          <ActionButton><ShareIcon />공유</ActionButton>
        </ActionCell>
      </Actions>
    </Details>

    <Feed>
      <Snackbar role="status">
        <span>이 활동을 공유하시겠습니까?</span>
        <SnackbarAction>공유</SnackbarAction>
      </Snackbar>
      <FeedCard />
    </Feed>

    <SystemNav>
      <NavKey aria-label="최근 앱"><RecentsIcon /></NavKey>
      <NavKey aria-label="홈"><HomeIcon /></NavKey>
      <NavKey aria-label="이전"><NavBackIcon /></NavKey>
    </SystemNav>
  </>
)

export default App
